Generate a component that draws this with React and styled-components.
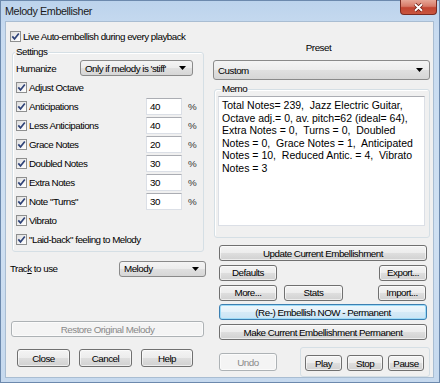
import React from 'react'
import styled, { createGlobalStyle } from 'styled-components'

const GlobalStyle = createGlobalStyle`
  html, body { margin: 0; padding: 0; background: #ffffff; }
  body {
    font-family: "Liberation Sans", Arial, sans-serif;
    font-size: 9.8px;
    letter-spacing: -0.5px;
    color: #000;
  }
  * { box-sizing: border-box; }
`

const Window = styled.div`
  width: 440px;
  height: 383px;
  border: 1px solid #6c89ad;
  background: linear-gradient(180deg, #bcd3ec 0%, #c8dbf0 8%, #cfe0f2 60%, #c6d9ee 100%);
  display: flex;
  flex-direction: column;
  padding: 0 5px 4px 4px;
`

const TitleBar = styled.div`
  height: 20px;
  margin-right: -3px;
  display: flex;
  justify-content: space-between;
  align-items: flex-start;
`

const Title = styled.div`
  font-size: 10.8px;
  letter-spacing: -0.4px;
  color: #1b1b1b;
  padding-top: 4px;
`

const CloseButton = styled.div`
  width: 37px;
  height: 15px;
  margin-top: -1px;
  border: 1px solid #7a2b22;
  border-top: none;
  border-radius: 0 0 4px 4px;
  background: linear-gradient(180deg, #e7a797 0%, #d77a68 45%, #c24532 55%, #c9563f 100%);
  display: flex;
  align-items: center;
  justify-content: center;
`

const Client = styled.div`
  flex: 1;
  background: #f0f0f0;
  border: 1px solid #a9bdd2;
  display: grid;
  grid-template-columns: 196px 217px;
  column-gap: 7px;
  padding: 0 3px 0 4px;
`

const Column = styled.div`
  display: flex;
  flex-direction: column;
`

const CheckRow = styled.label`
  display: flex;
  align-items: center;
  height: ${p => p.$h || 19}px;
  margin-top: ${p => p.$mt || 0}px;
  white-space: nowrap;
`

const CheckBox = styled.span`
  width: 11px;
  height: 11px;
  flex: none;
  border: 1px solid #8e8f8f;
  background: linear-gradient(135deg, #dcdcdc 0%, #f4f4f4 60%, #ffffff 100%);
  display: flex;
  align-items: center;
  justify-content: center;
  margin-right: 2px;
`

const Group = styled.div`
  position: relative;
  border: 1px solid #d5dfe5;
  border-radius: 3px;
  box-shadow: inset 1px 1px 0 #fff;
  margin-top: ${p => p.$mt || 0}px;
  margin-left: ${p => p.$ml || 0}px;
  width: ${p => (p.$w ? p.$w + 'px' : 'auto')};
  height: ${p => p.$h}px;
  padding: ${p => p.$pad || '0'};
`

const GroupLabel = styled.span`
  position: absolute;
  top: -7px;
  left: ${p => p.$left || 3}px;
  background: #f0f0f0;
  padding: 0 1px;
  line-height: 12px;
`

const Field = styled.div`
  display: flex;
  align-items: center;
  height: 16px;
`

const FieldLabel = styled.span`
  width: ${p => p.$w}px;
  flex: none;
`

const Combo = styled.div`
  width: ${p => (p.$w ? p.$w + 'px' : 'auto')};
  flex: ${p => (p.$w ? 'none' : '1')};
  height: 16px;
  margin-top: ${p => p.$mt || 0}px;
  border: 1px solid #8a8a8a;
  border-radius: 3px;
  background: linear-gradient(180deg, #f4f4f4 0%, #ececec 50%, #e0e0e0 51%, #d6d6d6 100%);
  display: flex;
  align-items: center;
  justify-content: space-between;
  padding: 0 6px 0 4px;
  white-space: nowrap;
`

const ValueRow = styled.div`
  display: grid;
  grid-template-columns: 130px 36px auto;
  align-items: center;
  height: 19px;
`

const Edit = styled.div`
  height: 17px;
  background: #fff;
  border: 1px solid #dbdfe6;
  border-top-color: #abadb3;
  padding-left: 3px;
  display: flex;
  align-items: center;
`

const Percent = styled.span`
  margin-left: 6px;
  color: #333;
`

const TrackRow = styled.div`
  display: flex;
  align-items: center;
  justify-content: space-between;
  margin-top: 8px;
  height: 17px;
`

const Button = styled.div`
  height: ${p => p.$h || 16}px;
  width: ${p => (p.$w ? p.$w + 'px' : 'auto')};
  flex: ${p => (p.$w ? 'none' : '1')};
  border: 1px solid ${p => (p.$disabled ? '#adb2b5' : p.$default ? '#3c7fb1' : '#707070')};
  border-radius: 3px;
  background: ${p =>
    p.$disabled
      ? '#f4f4f4'
      : p.$default
      ? 'linear-gradient(180deg, #eef7fc 0%, #e3f1fa 50%, #d5eaf7 51%, #cbe4f4 100%)'
      : 'linear-gradient(180deg, #f4f4f4 0%, #ececec 50%, #dedede 51%, #d1d1d1 100%)'};
  box-shadow: ${p => (p.$default ? 'inset 0 0 0 1px #9fdcf8' : 'inset 0 0 0 1px rgba(255,255,255,0.6)')};
  color: ${p => (p.$disabled ? '#8a8a8a' : '#000')};
  display: flex;
  align-items: center;
  justify-content: center;
  white-space: nowrap;
  margin-top: ${p => p.$mt || 0}px;
  margin-left: ${p => p.$ml || 0}px;
`

const ButtonRow = styled.div`
  display: flex;
  align-items: ${p => p.$align || 'center'};
  gap: ${p => p.$gap || 0}px;
  justify-content: ${p => p.$justify || 'flex-start'};
  margin-top: ${p => p.$mt || 0}px;
  padding-left: ${p => p.$pl || 0}px;
  padding-right: ${p => p.$pr || 0}px;
`

const PresetLabel = styled.div`
  text-align: center;
  height: 12px;
  line-height: 12px;
  margin-top: 20px;
  padding-right: 6px;
`

const MemoBox = styled.div`
  height: 130px;
  background: #fff;
  border: 1px solid #dbdfe6;
  border-top-color: #abadb3;
  padding: 2px 3px;
  font-family: "Liberation Sans", Arial, sans-serif;
  font-size: 10.5px;
  letter-spacing: 0;
  line-height: 12.6px;
  white-space: pre;
`

const PlayGroup = styled.div`
  margin-left: auto;
  width: 130px;
  height: 30px;
  border: 1px solid #d5dfe5;
  border-radius: 3px;
  display: flex;
  gap: 5px;
  padding: 7px 0 0 4px;
`

const Check = () => (
  <CheckBox>
    <svg width="9" height="9" viewBox="0 0 9 9">
      <path d="M1.3 4.4 L3.5 6.9 L7.8 1.4" fill="none" stroke="#2f4378" strokeWidth="1.7" />
    </svg>
  </CheckBox>
)

const Arrow = () => (
  <svg width="7" height="4" viewBox="0 0 7 4">
    <polygon points="0,0 7,0 3.5,4" fill="#000" />
  </svg>
)

const options = [
  ['Anticipations', '40'],
  ['Less Anticipations', '40'],
  ['Grace Notes', '20'],
  ['Doubled Notes', '30'],
  ['Extra Notes', '30'],
  ['Note "Turns"', '30'],
]

const memo = `Total Notes= 239,  Jazz Electric Guitar,
Octave adj.= 0, av. pitch=62 (ideal= 64),
Extra Notes = 0,  Turns = 0,  Doubled
Notes = 0,  Grace Notes = 1,  Anticipated
Notes = 10,  Reduced Antic. = 4,  Vibrato
Notes = 3`

const App = () => {
  return (
    <>
      <GlobalStyle />
      <Window>
        <TitleBar>
          <Title>Melody Embellisher</Title>
          <CloseButton>
            <svg width="11" height="9" viewBox="0 0 11 9">
              <path d="M2 1.2 L9 7.8 M9 1.2 L2 7.8" stroke="#6a1c13" strokeWidth="3.4" />
              <path d="M2 1.2 L9 7.8 M9 1.2 L2 7.8" stroke="#ffffff" strokeWidth="1.9" />
            </svg>
          </CloseButton>
        </TitleBar>
        <Client>
          <Column>
            <CheckRow $h={14} $mt={7}>
              <Check />
              Live Auto-embellish during every playback
            </CheckRow>
            <Group $mt={9} $ml={2} $w={192} $h={200} $pad="7px 0 0 3px">
              <GroupLabel $left={2}>Settings</GroupLabel>
              <Field>
                <FieldLabel $w={64}>Humanize</FieldLabel>
                <Combo $w={113}>
                  Only if melody is 'stiff'
                  <Arrow />
                </Combo>
              </Field>
              <CheckRow $mt={2}>
                <Check />
                Adjust Octave
              </CheckRow>
              {options.map(([name, value]) => (
                <ValueRow key={name}>
                  <CheckRow>
                    <Check />
                    {name}
                  </CheckRow>
                  <Edit>{value}</Edit>
                  <Percent>%</Percent>
                </ValueRow>
              ))}
              <CheckRow>
                <Check />
                Vibrato
              </CheckRow>
              <CheckRow>
                <Check />
                "Laid-back" feeling to Melody
              </CheckRow>
            </Group>
            <TrackRow>
              <span>
                Trac<u>k</u> to use
              </span>
              <Combo $w={87}>
                Melody
                <Arrow />
              </Combo>
            </TrackRow>
            <Button $disabled $mt={44} $ml={1} $w={193}>
              Restore Original Melody
            </Button>
            <ButtonRow $mt={12} $gap={9} $pl={7}>
              <Button $h={18} $w={53}>Close</Button>
              <Button $h={18} $w={53}>Cancel</Button>
              <Button $h={18} $w={52}>Help</Button>
            </ButtonRow>
          </Column>

          <Column>
            <PresetLabel>Preset</PresetLabel>
            <Combo $mt={6}>
              Custom
              <Arrow />
            </Combo>
            <Group $mt={9} $ml={1} $h={149} $pad="6px 4px 0 3px">
              <GroupLabel $left={6}>Memo</GroupLabel>
              <MemoBox>{memo}</MemoBox>
            </Group>
            <ButtonRow $mt={7} $pl={6} $pr={3}>
              <Button>Update Current Embellishment</Button>
            </ButtonRow>
            <ButtonRow $mt={3.75} $pl={6} $pr={3} $justify="space-between">
              <Button $w={58}>Defaults</Button>
              <Button $w={48}>Export...</Button>
            </ButtonRow>
            <ButtonRow $mt={3.75} $pl={6} $pr={3} $gap={7}>
              <Button $w={58}>More...</Button>
              <Button $w={59}>Stats</Button>
              <Button $w={48} $ml={28}>Import...</Button>
            </ButtonRow>
            <ButtonRow $mt={3.75} $pl={6} $pr={3}>
              <Button $default>(Re-) Embellish NOW - Permanent</Button>
            </ButtonRow>
            <ButtonRow $mt={3.75} $pl={6} $pr={3}>
              <Button>Make Current Embellishment Permanent</Button>
            </ButtonRow>
            <ButtonRow $mt={7} $pl={6} $align="flex-start">
              <Button $disabled $h={18} $w={58} $mt={6}>Undo</Button>
              <PlayGroup>
                <Button $w={37}>Play</Button>
                <Button $w={36}>Stop</Button>
                <Button $w={36}>Pause</Button>
              </PlayGroup>
            </ButtonRow>
          </Column>
        </Client>
      </Window>
    </>
  )
}

export default App
